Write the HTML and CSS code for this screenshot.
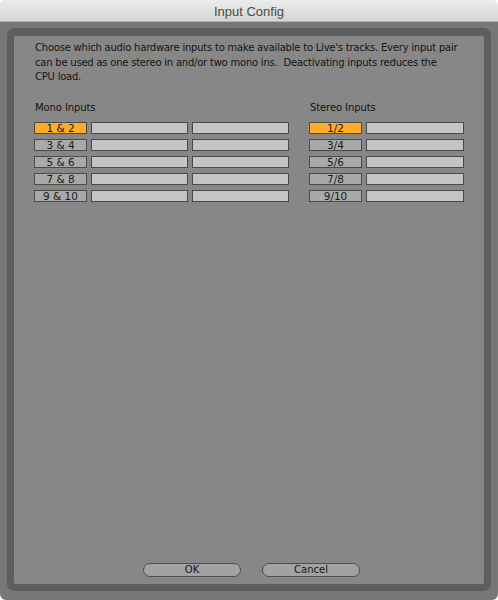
FILE: index.html
```html
<!DOCTYPE html>
<html>
<head>
<meta charset="utf-8">
<link rel="stylesheet" href="styles.css">
</head>
<body>
<div class="window">
  <div class="titlebar">Input Config</div>
  <div class="outer">
    <div class="frame">
      <div class="panel">
        <p class="intro">Choose which audio hardware inputs to make available to Live's tracks. Every input pair can be used as one stereo in and/or two mono ins.&nbsp; Deactivating inputs reduces the CPU load.</p>
        <div class="groups">
          <div class="group mono">
            <div class="group-title">Mono Inputs</div>
            <div class="rows">
              <div class="row"><div class="lbl on">1 &amp; 2</div><div class="slot"></div><div class="slot"></div></div>
              <div class="row"><div class="lbl">3 &amp; 4</div><div class="slot"></div><div class="slot"></div></div>
              <div class="row"><div class="lbl">5 &amp; 6</div><div class="slot"></div><div class="slot"></div></div>
              <div class="row"><div class="lbl">7 &amp; 8</div><div class="slot"></div><div class="slot"></div></div>
              <div class="row"><div class="lbl">9 &amp; 10</div><div class="slot"></div><div class="slot"></div></div>
            </div>
          </div>
          <div class="group stereo">
            <div class="group-title">Stereo Inputs</div>
            <div class="rows">
              <div class="row"><div class="lbl on">1/2</div><div class="slot wide"></div></div>
              <div class="row"><div class="lbl">3/4</div><div class="slot wide"></div></div>
              <div class="row"><div class="lbl">5/6</div><div class="slot wide"></div></div>
              <div class="row"><div class="lbl">7/8</div><div class="slot wide"></div></div>
              <div class="row"><div class="lbl">9/10</div><div class="slot wide"></div></div>
            </div>
          </div>
        </div>
        <div class="buttons">
          <div class="btn">OK</div>
          <div class="btn">Cancel</div>
        </div>
      </div>
    </div>
  </div>
</div>
</body>
</html>
```
FILE: styles.css
```css
html, body {
  margin: 0;
  padding: 0;
  background: #ffffff;
}
body {
  font-family: "DejaVu Sans", "Liberation Sans", sans-serif;
  color: #141414;
}
.window {
  width: 498px;
  height: 600px;
  display: flex;
  flex-direction: column;
  border-radius: 5px 5px 6px 6px;
  overflow: hidden;
}
.titlebar {
  height: 21px;
  line-height: 23px;
  text-align: center;
  font-family: "Liberation Sans", "DejaVu Sans", sans-serif;
  font-size: 13px;
  color: #4a4a4a;
  background: linear-gradient(#ececec, #d4d4d4);
  border-bottom: 1px solid #b4b4b4;
}
.outer {
  flex: 1;
  background: #777777;
  padding: 6px 7px 9px 7px;
  display: flex;
}
.frame {
  flex: 1;
  background: #5e5e5e;
  border-radius: 7px;
  padding: 8px 7px 7px 7px;
  display: flex;
}
.panel {
  flex: 1;
  background: #878787;
  border-radius: 2px;
  padding: 4px 20px 7px 20px;
  display: flex;
  flex-direction: column;
}
.intro {
  margin: 0;
  max-width: 423px;
  font-size: 10px;
  line-height: 14.6px;
  letter-spacing: -0.22px;
  padding-left: 1px;
  padding-top: 1px;
}
.groups {
  display: flex;
  margin-top: 16px;
}
.group-title {
  font-size: 10px;
  line-height: 14px;
  padding-left: 1px;
  letter-spacing: -0.1px;
}
.mono {
  width: 275px;
}
.rows {
  margin-top: 7px;
  display: flex;
  flex-direction: column;
  gap: 5px;
}
.row {
  display: flex;
  gap: 4px;
}
.lbl, .slot {
  height: 10px;
  border: 1px solid #4a4a4a;
  box-sizing: content-box;
}
.lbl {
  width: 51px;
  background: #a9a9a9;
  font-size: 10.5px;
  line-height: 11px;
  text-align: center;
  color: #1a1a1a;
}
.lbl.on {
  background: #ffad29;
}
.slot {
  width: 95px;
  background: #c4c4c4;
}
.slot.wide {
  width: 96px;
}
.buttons {
  margin-top: auto;
  display: flex;
  justify-content: center;
  gap: 21px;
  padding-left: 5px;
}
.btn {
  width: 96px;
  height: 12px;
  border: 1px solid #4e4e4e;
  border-radius: 7px;
  background: #a2a2a2;
  font-size: 10px;
  line-height: 12px;
  text-align: center;
  color: #151515;
}
```
